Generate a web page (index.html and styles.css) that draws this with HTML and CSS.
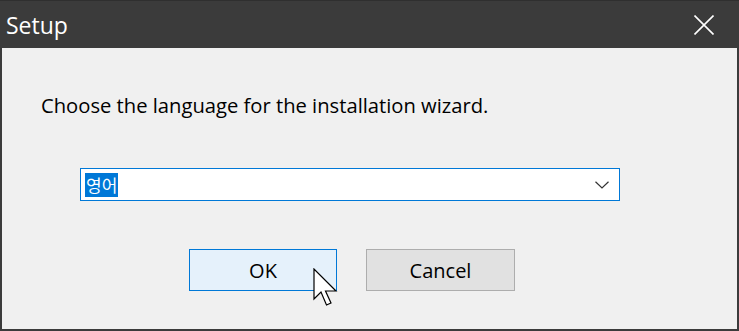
FILE: index.html
```html
<!DOCTYPE html>
<html>
<head>
<meta charset="utf-8">
<link rel="stylesheet" href="styles.css">
</head>
<body>
<div class="window">
  <div class="titlebar">
    <span class="title">Setup</span>
    <span class="close">
      <svg width="20" height="20" viewBox="0 0 20 20"><path d="M0.5 0.5 L19.5 19.5 M19.5 0.5 L0.5 19.5" stroke="#ffffff" stroke-width="1.6" fill="none"/></svg>
    </span>
  </div>
  <div class="content">
    <p class="prompt">Choose the language for the installation wizard.</p>
    <div class="combo">
      <span class="selected">영어</span>
      <svg class="chevron" width="14" height="8" viewBox="0 0 14 8"><path d="M0.5 0.8 L7 7 L13.5 0.8" stroke="#333" stroke-width="1.2" fill="none"/></svg>
    </div>
    <div class="buttons">
      <button class="btn btn-ok">OK</button>
      <button class="btn btn-cancel">Cancel</button>
    </div>
  </div>
  <svg class="cursor" width="28" height="40" viewBox="0 0 28 40">
    <path d="M1 1 L1 31 L8 24 L13.5 37 L18 35 L12.5 23 L23 23 Z" fill="#ffffff" stroke="#000000" stroke-width="1.2" stroke-linejoin="miter"/>
  </svg>
</div>
</body>
</html>
```

FILE: styles.css
```css
html, body {
  margin: 0;
  padding: 0;
  background: #3a3a3a;
}
.window {
  position: relative;
  width: 739px;
  height: 331px;
  box-sizing: border-box;
  background: #3b3b3b;
  border-top: 1px solid #2f2f2f;
  display: flex;
  flex-direction: column;
  overflow: hidden;
}
.titlebar {
  height: 47px;
  display: flex;
  align-items: center;
  justify-content: space-between;
  padding: 0 0 0 6px;
  flex: none;
}
.title {
  font-family: "Open Sans", "Noto Sans", sans-serif;
  font-size: 23px;
  color: #ffffff;
  line-height: 1;
  margin-top: 2px;
}
.close {
  width: 20px;
  height: 20px;
  margin-right: 25px;
  display: flex;
}
.content {
  flex: 1;
  margin: 0 2px 2px 2px;
  background: #f0f0f0;
  display: flex;
  flex-direction: column;
}
.prompt {
  margin: 45px 0 0 39px;
  font-family: "Open Sans", "Noto Sans", sans-serif;
  font-size: 20.2px;
  line-height: 24px;
  color: #000000;
}
.combo {
  margin: 51px 0 0 78px;
  width: 540px;
  height: 33px;
  box-sizing: border-box;
  border: 1px solid #0078d7;
  background: #ffffff;
  display: flex;
  align-items: center;
  justify-content: space-between;
  padding: 0 10px 0 4px;
}
.selected {
  background: #0078d7;
  color: #ffffff;
  font-family: "Noto Sans CJK KR", sans-serif;
  font-size: 17px;
  line-height: 24px;
  height: 24px;
  padding: 0 1px;
}
.chevron {
  display: block;
}
.buttons {
  margin: 48px 0 0 187px;
  display: flex;
  gap: 29px;
}
.btn {
  width: 148px;
  height: 42px;
  box-sizing: border-box;
  font-family: "Open Sans", "Noto Sans", sans-serif;
  font-size: 20px;
  color: #000000;
  padding: 0;
  margin: 0;
}
.btn-ok {
  background: #e5f1fb;
  border: 1px solid #0078d7;
}
.btn-cancel {
  width: 149px;
  background: #e1e1e1;
  border: 1px solid #adadad;
}
.cursor {
  position: absolute;
  left: 313px;
  top: 267px;
}
```
